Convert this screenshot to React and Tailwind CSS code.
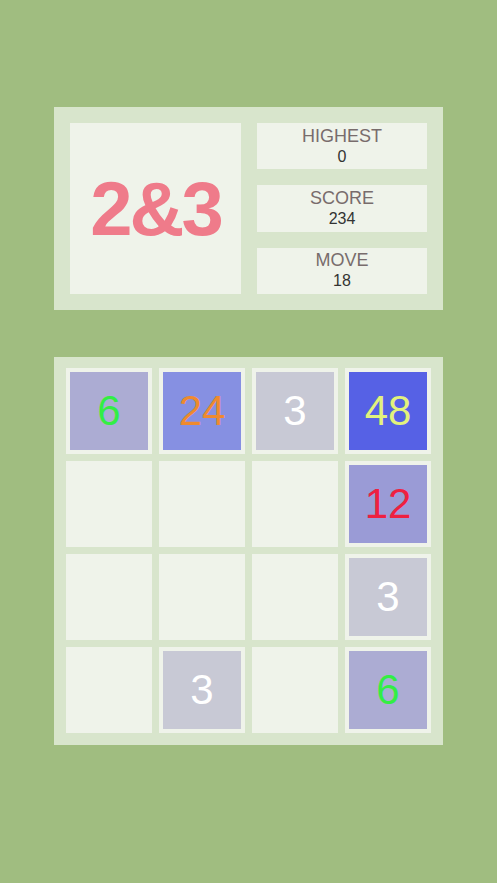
const stats = [
  { label: "HIGHEST", value: "0" },
  { label: "SCORE", value: "234" },
  { label: "MOVE", value: "18" },
];

// each tile: value, tile colour, text colour (null = empty cell)
const board = [
  [
    { v: 6, bg: "bg-[#acacd3]", fg: "text-[#33ee44]" },
    { v: 24, bg: "bg-[#8690e2]", fg: "text-[#ee8a2e]" },
    { v: 3, bg: "bg-[#c8c9d5]", fg: "text-white" },
    { v: 48, bg: "bg-[#5661e5]", fg: "text-[#e2f27c]" },
  ],
  [null, null, null, { v: 12, bg: "bg-[#9a9bd6]", fg: "text-[#ee2040]" }],
  [null, null, null, { v: 3, bg: "bg-[#c8c9d5]", fg: "text-white" }],
  [
    null,
    { v: 3, bg: "bg-[#c8c9d5]", fg: "text-white" },
    null,
    { v: 6, bg: "bg-[#acacd3]", fg: "text-[#33ee44]" },
  ],
];

function StatBox({ label, value }) {
  return (
    <div className="flex flex-1 flex-col items-center justify-center bg-[#eff3ea]">
      <span className="text-[18px] leading-[21px] text-[#786c6c]">{label}</span>
      <span className="text-[16px] leading-[20px] text-[#333333]">{value}</span>
    </div>
  );
}

function Cell({ tile }) {
  return (
    <div className="h-[86px] w-[86px] bg-[#eff3ea] p-1">
      {tile && (
        <div
          className={`flex h-full w-full items-center justify-center text-[42px] leading-none ${tile.bg} ${tile.fg}`}
        >
          {tile.v}
        </div>
      )}
    </div>
  );
}

export default function App() {
  return (
    <div
      className="flex min-h-[883px] w-full flex-col items-center gap-[47px] bg-[#a0bd80] pt-[107px]"
      style={{ fontFamily: '"Liberation Sans", Arial, sans-serif' }}
    >
      {/* Header panel */}
      <div className="flex w-[389px] gap-4 bg-[#d8e5cc] p-4">
        <div className="flex h-[171px] w-[171px] items-center justify-center bg-[#eff3ea]">
          <span className="text-[76px] font-bold leading-none tracking-[-3px] text-[#ef7b8a]">
            2&amp;3
          </span>
        </div>
        <div className="flex w-[170px] flex-col gap-4">
          {stats.map((s) => (
            <StatBox key={s.label} {...s} />
          ))}
        </div>
      </div>

      {/* Board */}
      <div className="grid w-[389px] grid-cols-4 gap-[7px] bg-[#d8e5cc] px-3 pt-[11px] pb-3">
        {board.flat().map((tile, i) => (
          <Cell key={i} tile={tile} />
        ))}
      </div>
    </div>
  );
}
